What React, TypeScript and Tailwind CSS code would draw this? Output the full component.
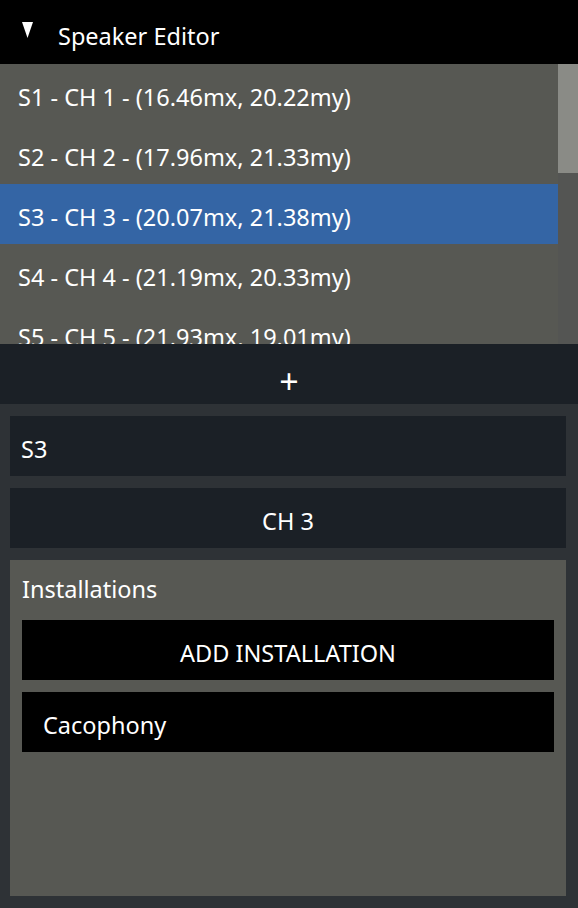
import React from "react";

const speakers = [
  { id: "S1", ch: "CH 1", x: "16.46", y: "20.22" },
  { id: "S2", ch: "CH 2", x: "17.96", y: "21.33" },
  { id: "S3", ch: "CH 3", x: "20.07", y: "21.38" },
  { id: "S4", ch: "CH 4", x: "21.19", y: "20.33" },
  { id: "S5", ch: "CH 5", x: "21.93", y: "19.01" },
];

export default function App() {
  const selected = "S3";

  return (
    <div
      className="w-[578px] h-[908px] flex flex-col bg-[#2e3236] text-white text-[23.5px] overflow-hidden"
      style={{ fontFamily: '"Noto Sans", "Open Sans", sans-serif' }}
    >
      {/* Header */}
      <div className="h-16 shrink-0 bg-black flex items-center">
        <svg width="12" height="18" viewBox="0 0 12 18" className="ml-[22px] mb-[3px]">
          <polygon points="0,0 11,0 5.5,16" fill="white" />
        </svg>
        <span className="ml-[24px] leading-none pt-[10px]">Speaker Editor</span>
      </div>

      {/* Speaker list */}
      <div className="h-[280px] shrink-0 flex bg-[#575853] overflow-hidden">
        <div className="flex-1 flex flex-col">
          {speakers.map((s) => (
            <div
              key={s.id}
              className={`h-[60px] shrink-0 flex items-center pl-[18px] pt-[8px] leading-none whitespace-nowrap ${
                s.id === selected ? "bg-[#3465a5]" : ""
              }`}
            >
              {s.id} - {s.ch} - ({s.x}mx, {s.y}my)
            </div>
          ))}
        </div>
        <div className="w-5 shrink-0 bg-[#545553] flex flex-col">
          <div className="h-[109px] bg-[#8a8b86]" />
        </div>
      </div>

      {/* Add speaker */}
      <div className="h-[60px] shrink-0 bg-[#1b2026] flex items-center justify-center text-[34px] leading-none pt-[14px]">
        +
      </div>

      {/* Details */}
      <div className="flex-1 flex flex-col gap-3 pl-[10px] pr-[12px] pt-3 pb-3">
        <div className="h-[60px] shrink-0 bg-[#1b2026] flex items-center pl-[11px] pt-[8px] leading-none">S3</div>
        <div className="h-[60px] shrink-0 bg-[#1b2026] flex items-center justify-center pt-[8px] leading-none">CH 3</div>
        <div className="flex-1 bg-[#575853] flex flex-col pl-3 pr-3 pt-[18px] gap-3">
          <div className="leading-none h-[30px]">Installations</div>
          <div className="h-[60px] shrink-0 bg-black flex items-center justify-center pt-[8px] leading-none">
            ADD INSTALLATION
          </div>
          <div className="h-[60px] shrink-0 bg-black flex items-center pl-[21px] pt-[8px] leading-none">Cacophony</div>
        </div>
      </div>
    </div>
  );
}
